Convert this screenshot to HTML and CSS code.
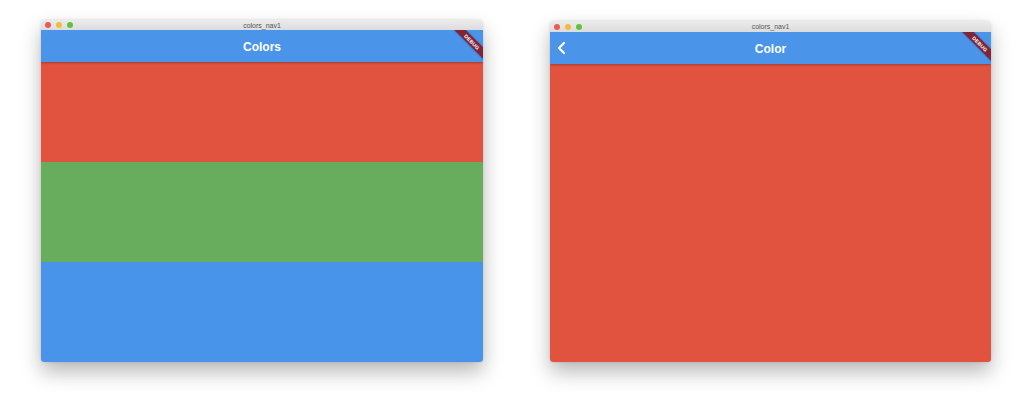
FILE: index.html
```html
<!DOCTYPE html>
<html>
<head>
<meta charset="utf-8">
<link rel="stylesheet" href="styles.css">
</head>
<body>
<div class="stage">
  <div class="window win-list">
    <div class="titlebar">
      <div class="lights"><span class="dot red"></span><span class="dot yellow"></span><span class="dot green"></span></div>
      <div class="wintitle">colors_nav1</div>
    </div>
    <div class="content">
      <div class="appbar"><span class="apptitle">Colors</span></div>
      <div class="list">
        <div class="row c-red"></div>
        <div class="row c-green"></div>
        <div class="row c-blue"></div>
      </div>
      <div class="banner">DEBUG</div>
    </div>
  </div>
  <div class="window win-detail">
    <div class="titlebar tall">
      <div class="lights"><span class="dot red"></span><span class="dot yellow"></span><span class="dot green"></span></div>
      <div class="wintitle">colors_nav1</div>
    </div>
    <div class="content">
      <div class="appbar">
        <svg class="back" width="10" height="14" viewBox="0 0 10 14"><polyline points="7,2 2,7 7,12" fill="none" stroke="#fff" stroke-width="2.2" stroke-linecap="round" stroke-linejoin="round"/></svg>
        <span class="apptitle">Color</span>
      </div>
      <div class="detail c-red"></div>
      <div class="banner">DEBUG</div>
    </div>
  </div>
</div>
</body>
</html>
```

FILE: styles.css
```css
html, body {
  margin: 0;
  padding: 0;
  background: #ffffff;
  width: 1024px;
  height: 401px;
  overflow: hidden;
  font-family: "Liberation Sans", Arial, sans-serif;
}
.stage {
  display: flex;
  align-items: flex-start;
  padding-left: 41px;
  gap: 67px;
}
.window {
  display: flex;
  flex-direction: column;
  border-radius: 4px 4px 3px 3px;
  overflow: hidden;
  box-shadow: 0 10px 20px rgba(0,0,0,0.28), 0 0 3px rgba(0,0,0,0.12);
}
.win-list { width: 442px; margin-top: 20px; }
.win-detail { width: 441px; margin-top: 21px; }
.titlebar {
  height: 10px;
  background: linear-gradient(#ebebeb, #dcdcdc);
  position: relative;
  display: flex;
  align-items: center;
  padding-left: 4px;
}
.titlebar.tall { height: 11px; }
.lights { display: flex; gap: 5px; }
.dot { width: 6px; height: 6px; border-radius: 50%; display: block; }
.dot.red { background: #ee5a52; }
.dot.yellow { background: #f2bc3f; }
.dot.green { background: #5fc23f; }
.wintitle {
  position: absolute;
  left: 0;
  right: 0;
  top: 0;
  height: 100%;
  display: flex;
  align-items: center;
  justify-content: center;
  font-size: 7px;
  color: #555;
}
.content {
  position: relative;
  overflow: hidden;
  display: flex;
  flex-direction: column;
}
.appbar {
  height: 32px;
  background: #4a94ea;
  display: flex;
  align-items: center;
  justify-content: center;
  position: relative;
  box-shadow: 0 1px 2px rgba(0,0,0,0.3);
  z-index: 1;
}
.apptitle {
  color: #fff;
  font-weight: bold;
  font-size: 12px;
  padding-top: 1px;
}
.back {
  position: absolute;
  left: 7px;
  top: 9px;
}
.row { height: 100px; }
.detail { height: 298px; }
.c-red { background: #e1533f; }
.c-green { background: #68ad5e; }
.c-blue { background: #4894ea; }
.banner {
  position: absolute;
  right: -15px;
  top: 8px;
  width: 52px;
  height: 8px;
  line-height: 8px;
  transform: rotate(45deg);
  background: #7e2539;
  color: #fff;
  font-size: 5px;
  font-weight: bold;
  text-align: center;
  letter-spacing: 0.3px;
  z-index: 2;
  box-shadow: 0 0 2px rgba(0,0,0,0.3);
}
```
